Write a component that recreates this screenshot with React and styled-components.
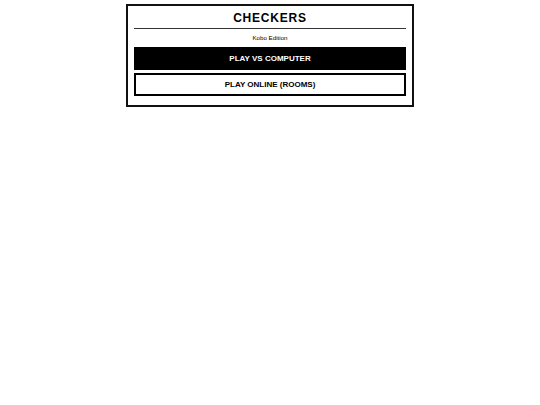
import React from "react";
import styled, { createGlobalStyle } from "styled-components";

const GlobalStyle = createGlobalStyle`
  html, body {
    margin: 0;
    padding: 0;
    background: #fff;
  }
  body {
    font-family: "Liberation Sans", Arial, sans-serif;
    color: #000;
  }
`;

const App = () => {
  return (
    <>
      <GlobalStyle />
      <Panel>
        <Title>CHECKERS</Title>
        <Subtitle>Kobo Edition</Subtitle>
        <Menu>
          <MenuButton $primary>PLAY VS COMPUTER</MenuButton>
          <MenuButton>PLAY ONLINE (ROOMS)</MenuButton>
        </Menu>
      </Panel>
    </>
  );
};

export default App;

const Panel = styled.div`
  box-sizing: border-box;
  width: 288px;
  margin: 4px auto 0;
  border: 2px solid #111;
  padding: 5px 6px 9px;
  background: #fff;
`;

const Title = styled.h1`
  margin: 0;
  padding-bottom: 3px;
  border-bottom: 1px solid #333;
  font-size: 12px;
  line-height: 14px;
  font-weight: 700;
  letter-spacing: 0.8px;
  text-align: center;
`;

const Subtitle = styled.div`
  margin: 5px 0 6px;
  font-size: 6.2px;
  line-height: 7px;
  text-align: center;
`;

const Menu = styled.div`
  display: flex;
  flex-direction: column;
  gap: 3px;
`;

const MenuButton = styled.button`
  box-sizing: border-box;
  display: flex;
  align-items: center;
  justify-content: center;
  width: 100%;
  height: 23px;
  margin: 0;
  padding: 0;
  border: 2px solid #000;
  border-radius: 0;
  background: ${(p) => (p.$primary ? "#000" : "#fff")};
  color: ${(p) => (p.$primary ? "#fff" : "#000")};
  font-family: "Liberation Sans", Arial, sans-serif;
  font-size: 8px;
  font-weight: 700;
  cursor: pointer;
`;
